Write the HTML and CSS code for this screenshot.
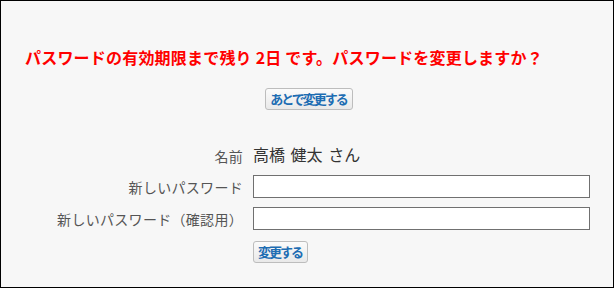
FILE: index.html
```html
<!DOCTYPE html>
<html lang="ja">
<head>
	<meta charset="UTF-8">
	<title>パスワードの変更</title>
	<link rel="stylesheet" href="styles.css">
</head>
<body>
	<div id="frame">
		<div class="notice">パスワードの有効期限まで残り 2日 です。パスワードを変更しますか？</div>
		<div class="later">
			<button class="btn" type="button">あとで変更する</button>
		</div>
		<form class="pw-form">
			<div class="label name-label">名前</div>
			<div class="name">高橋 健太 さん</div>
			<label class="label" for="pw1">新しいパスワード</label>
			<input class="field" id="pw1" type="password">
			<label class="label" for="pw2">新しいパスワード（確認用）</label>
			<input class="field" id="pw2" type="password">
			<div></div>
			<div class="submit-cell">
				<button class="btn" type="button">変更する</button>
			</div>
		</form>
	</div>
</body>
</html>
```

FILE: styles.css
```css
html, body {
	margin: 0;
	padding: 0;
}
body {
	font-family: "Noto Sans CJK JP", "Noto Sans", sans-serif;
}
#frame {
	width: 612px;
	height: 286px;
	border: 1px solid #000;
	background-color: #f7f7f7;
	overflow: hidden;
}
.notice {
	margin-top: 45px;
	padding-left: 24px;
	font-size: 16px;
	line-height: 22px;
	font-weight: bold;
	letter-spacing: 0.2px;
	color: #ff0000;
	white-space: nowrap;
}
.later {
	margin-top: 20px;
	text-align: center;
	padding-left: 4px;
}
.btn {
	height: 22px;
	margin: 0;
	padding: 0 5px 0 4px;
	border: 1px solid #bdbdbd;
	border-radius: 3px;
	background: linear-gradient(#fbfbfb, #e9e9e9);
	color: #1d6db3;
	font-family: "Noto Sans CJK JP", sans-serif;
	font-size: 13px;
	font-weight: bold;
	letter-spacing: -2px;
	line-height: 20px;
	vertical-align: top;
}
.pw-form {
	display: grid;
	grid-template-columns: 242px 337px;
	column-gap: 10px;
	row-gap: 9px;
	margin-top: 30px;
	align-items: center;
}
.label {
	text-align: right;
	font-size: 14px;
	letter-spacing: 0.3px;
	color: #555;
	white-space: nowrap;
	line-height: 20px;
}
.name-label {
	padding-top: 4px;
}
.name {
	font-size: 16px;
	line-height: 22px;
	word-spacing: 2px;
	color: #333;
}
.field {
	box-sizing: border-box;
	width: 337px;
	height: 23px;
	margin: 0;
	border: 1px solid #707070;
	background: #fff;
}
.submit-cell {
	padding-top: 2px;
}
```
